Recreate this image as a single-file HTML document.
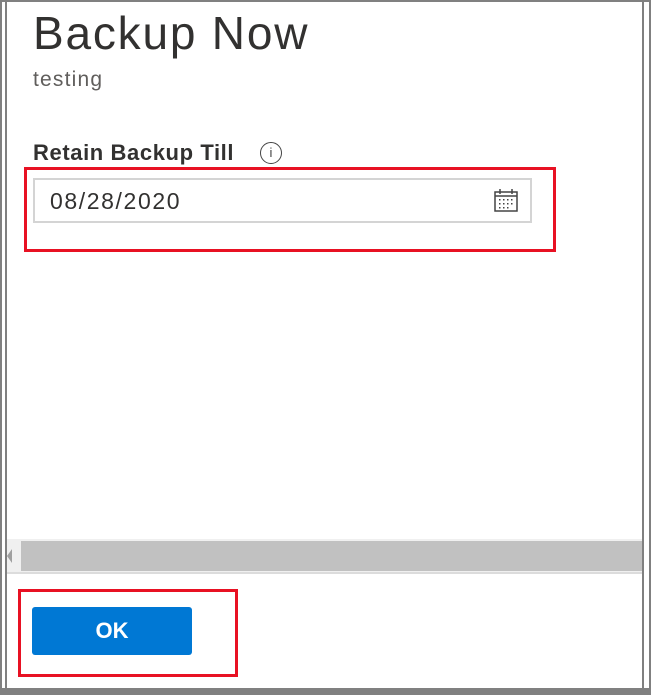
<!DOCTYPE html>
<html><head><style>
body{margin:0;width:651px;height:695px;position:relative;background:#fff;font-family:"Liberation Sans",sans-serif;overflow:hidden}
div{position:absolute;box-sizing:border-box;white-space:nowrap}
</style></head><body>
<div style="left:0;top:0;width:651px;height:695px;border:2px solid #808080;border-bottom-width:7px"></div>
<div style="left:5px;top:2px;width:2px;height:686px;background:#808080"></div>
<div style="left:642px;top:2px;width:2px;height:686px;background:#808080"></div>
<div style="left:33px;top:6px;font-size:46px;color:#323130;line-height:54px;letter-spacing:1.8px">Backup Now</div>
<div style="left:33px;top:68px;font-size:21px;color:#605e5c;letter-spacing:1.2px">testing</div>
<div style="left:33px;top:140px;font-size:22px;color:#323130;font-weight:bold;letter-spacing:0.6px">Retain Backup Till</div>
<div style="left:260px;top:142px;width:22px;height:22px;border:1.5px solid #444;border-radius:50%;font-size:13px;text-align:center;line-height:19px;color:#444">i</div>
<div style="left:24px;top:167px;width:532px;height:85px;border:3px solid #e81123"></div>
<div style="left:33px;top:178px;width:499px;height:45px;border:2px solid #d4d4d4"></div>
<div style="left:50px;top:188px;font-size:23px;color:#323130;letter-spacing:1.6px">08/28/2020</div>
<svg style="position:absolute;left:493px;top:189px" width="26" height="24" viewBox="0 0 26 24"><rect x="2" y="3" width="22" height="19" fill="none" stroke="#444" stroke-width="1.5"/><line x1="2" y1="7" x2="24" y2="7" stroke="#444" stroke-width="1.5"/><line x1="7" y1="0" x2="7" y2="5" stroke="#444" stroke-width="1.5"/><line x1="19" y1="0" x2="19" y2="5" stroke="#444" stroke-width="1.5"/><g fill="#444"><rect x="6" y="10" width="1.5" height="1.5"/><rect x="10" y="10" width="1.5" height="1.5"/><rect x="14" y="10" width="1.5" height="1.5"/><rect x="18" y="10" width="1.5" height="1.5"/><rect x="6" y="14" width="1.5" height="1.5"/><rect x="10" y="14" width="1.5" height="1.5"/><rect x="14" y="14" width="1.5" height="1.5"/><rect x="18" y="14" width="1.5" height="1.5"/><rect x="6" y="18" width="1.5" height="1.5"/><rect x="10" y="18" width="1.5" height="1.5"/><rect x="14" y="18" width="1.5" height="1.5"/></g></svg>
<div style="left:7px;top:539px;width:635px;height:34px;background:#f0f0f0"></div>
<div style="left:21px;top:541px;width:621px;height:30px;background:#c1c1c1"></div>
<div style="left:7px;top:549px;width:0;height:0;border-top:7px solid transparent;border-bottom:7px solid transparent;border-right:5px solid #a0a0a0"></div>
<div style="left:7px;top:572px;width:635px;height:2px;background:#dcdcdc"></div>
<div style="left:18px;top:589px;width:220px;height:88px;border:3px solid #e81123"></div>
<div style="left:32px;top:607px;width:160px;height:48px;background:#0078d4;border-radius:3px;color:#fff;font-size:22px;font-weight:bold;text-align:center;line-height:48px">OK</div>
</body></html>
